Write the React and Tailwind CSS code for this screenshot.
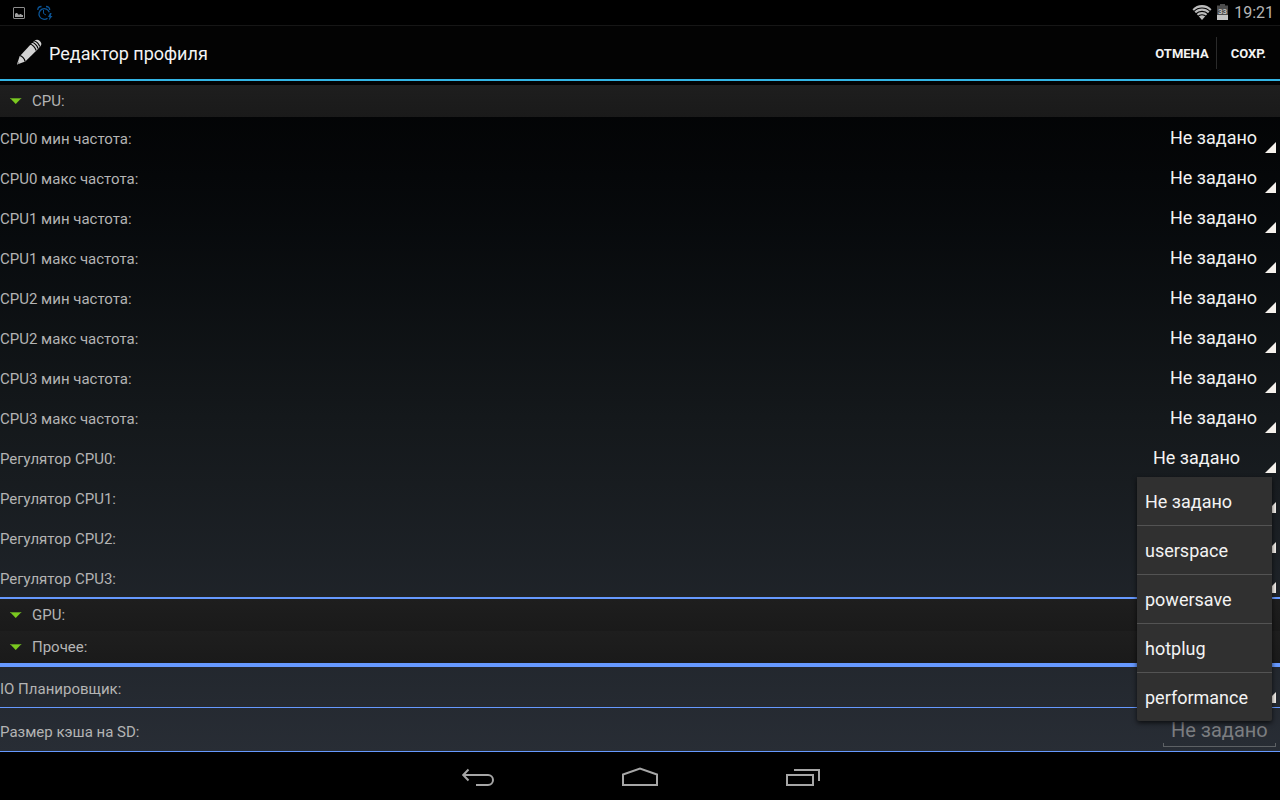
import { useState } from "react";

const UNSET = "Не задано";
const GOVERNORS = [UNSET, "userspace", "powersave", "hotplug", "performance"];

const FREQUENCIES = [
  "CPU0 мин частота:",
  "CPU0 макс частота:",
  "CPU1 мин частота:",
  "CPU1 макс частота:",
  "CPU2 мин частота:",
  "CPU2 макс частота:",
  "CPU3 мин частота:",
  "CPU3 макс частота:",
];

const REGULATORS = [
  "Регулятор CPU0:",
  "Регулятор CPU1:",
  "Регулятор CPU2:",
  "Регулятор CPU3:",
];

function StatusBar() {
  return (
    <div className="flex h-[26px] items-center justify-between border-b border-[#161616] bg-black pr-[6px] pl-[13px]">
      <div className="flex items-center gap-[12px]">
        <svg width="12" height="12" viewBox="0 0 12 12" aria-hidden="true">
          <rect x="0.5" y="0.5" width="11" height="11" rx="0.5" fill="none" stroke="#8c8c8c" />
          <path d="M2 10V7l1-1h1l1 1 1 1 1-1h1l1 1h1v2z" fill="#a0a0a0" />
        </svg>
        <svg width="16" height="16" viewBox="0 0 16 16" fill="none" stroke="#0b5394" aria-hidden="true">
          <path d="M10.500 13.200A5.300 5.300 0 1 1 12.300 7.300" strokeWidth="1.300" />
          <path d="M6.500 5v3.500L9 10" />
          <path d="M.8 5C.8 2.800 2 1.500 4.500 1.500M9 1.500c2.500 0 3.700 1.300 3.700 3.500" strokeWidth="1.300" />
          <path d="M13 8 11 12h1.500l-.7 3.500L15.500 11h-1.700l.8-3z" fill="#0b5394" stroke="none" />
        </svg>
      </div>
      <div className="flex items-center">
        <svg width="20" height="15" viewBox="0 0 20 15" aria-hidden="true">
          <path d="M10 15 .5 4.200C3 1.500 6.300 0 10 0s7 1.500 9.500 4.200z" fill="#bdbdbd" />
          <g fill="none" stroke="#000" strokeWidth="1.100">
            <path d="M2 6.300C4.200 4.100 7 3 10 3s5.800 1.100 8 3.300" />
            <path d="M3.800 9c1.700-1.700 3.800-2.600 6.200-2.600s4.500.9 6.200 2.600" />
            <path d="M5.600 11.700c1.200-1.200 2.700-1.900 4.400-1.900s3.200.7 4.400 1.900" />
          </g>
        </svg>
        <svg className="ml-[5px] mb-[2px]" width="11" height="16" viewBox="0 0 11 16" aria-hidden="true">
          <path d="M3 0h5v1.500h3V11H0V1.500h3z" fill="#4d4d4d" />
          <path d="M0 11h11v5H0z" fill="#c4c4c4" />
          <text x="5.500" y="10" textAnchor="middle" fontSize="8" fontWeight="700" fill="#bdbdbd" fontFamily="Roboto, sans-serif">33</text>
        </svg>
        <time className="ml-[6px] text-[16px] leading-5 text-[#b5b5b5]">19:21</time>
      </div>
    </div>
  );
}

function ActionBar() {
  return (
    <header className="flex h-[55px] items-center border-b-2 border-[#33b5e5] bg-[#030303]">
      <svg className="ml-4" width="27" height="27" viewBox="0 0 27 27" aria-hidden="true">
        <path
          d="M1 25.500 3.500 17.500 15.500 4.500 18.500 1.700c1.700-1.400 3.600-1.300 5.300.3s2.100 3.400.8 5L21.500 10.500 9.300 22.500z"
          fill="#d2d2d2"
        />
        <g fill="none" stroke="#030303" strokeWidth="1.200">
          <path d="M14 5c2.500.8 5 3.200 6.200 6.500" />
          <path d="M16 3.300c2.500.8 5 3 6 6.200" />
          <path d="M18 1.800c2.500.8 4.700 2.800 5.700 5.700" />
          <path d="M3.600 16.500c2.400.6 4.700 2.800 5.600 6" />
        </g>
        <path d="m1 25.500.9-3 2 1.900z" fill="#888" />
      </svg>
      <h1 className="ml-[6px] pt-[2px] text-[18px] leading-6 text-[#f3f3f3]">Редактор профиля</h1>
      <div className="ml-auto flex h-8 items-center text-[13px] font-bold text-[#f3f3f3]">
        <button type="button" className="h-8 pt-[2px] pr-[7px]">ОТМЕНА</button>
        <button type="button" className="h-8 border-l border-[#2a2a2a] pt-[2px] pr-[14px] pl-[14px]">СОХР.</button>
      </div>
    </header>
  );
}

function Section({ title }) {
  return (
    <h2>
      <button
        type="button"
        className="flex h-8 w-full items-center bg-linear-to-b from-[#1e1e1e] to-[#1a1a1a] pl-[10px] text-left text-[15px] text-[#b4b4b4]"
      >
        <svg width="12" height="6" viewBox="0 0 12 6" aria-hidden="true">
          <path d="M0 0h11.500L5.700 6z" fill="#7bc91f" />
          <path d="M0 0h11.500l-1 1H1z" fill="#5a9420" />
        </svg>
        <span className="ml-[10px]">{title}</span>
      </button>
    </h2>
  );
}

function Corner() {
  return (
    <svg
      className="pointer-events-none absolute right-1 bottom-1"
      width="11"
      height="11"
      viewBox="0 0 11 11"
      aria-hidden="true"
    >
      <path d="M11 0v11H0z" fill="#f5f1ec" />
    </svg>
  );
}

function SelectRow({ id, label, wide, options, value, onChange, children }) {
  return (
    <div className="relative flex h-10 items-center justify-between">
      <label htmlFor={id} className="pt-1 text-[15px] leading-5 text-[#b4b4b4]">
        {label}
      </label>
      <div className="relative">
        <select
          id={id}
          value={value}
          onChange={onChange}
          className={`block h-10 appearance-none bg-transparent pl-2 text-[18px] text-[#f3f3f3] outline-none ${
            wide ? "w-[135px]" : "w-[118px]"
          }`}
        >
          {options.map((option) => (
            <option key={option} className="bg-[#303030]">
              {option}
            </option>
          ))}
        </select>
        <Corner />
      </div>
      {children}
    </div>
  );
}

function GovernorMenu({ onPick }) {
  return (
    <ul
      role="listbox"
      aria-label="Регулятор CPU0"
      className="absolute top-full right-2 z-10 w-[135px] divide-y divide-[#535353] rounded-b-[2px] bg-[#303030] shadow-[0_2px_5px_rgba(0,0,0,0.7)]"
    >
      {GOVERNORS.map((name) => (
        <li key={name} role="option" aria-selected={name === UNSET}>
          <button
            type="button"
            onClick={() => onPick(name)}
            className="block h-12 w-full px-2 text-left text-[18px] text-[#f3f3f3]"
          >
            {name}
          </button>
        </li>
      ))}
    </ul>
  );
}

function NavBar() {
  return (
    <nav className="flex h-12 items-center justify-center gap-[126px] bg-black">
      <button type="button" aria-label="Назад">
        <svg width="36" height="22" viewBox="0 0 36 22" fill="none" stroke="#a6a6a6" strokeWidth="2">
          <path d="M4 10h25a5 5 0 0 1 0 10H17M9.500 4.500 4.200 10l5.300 5.500" />
        </svg>
      </button>
      <button type="button" aria-label="Домой">
        <svg width="38" height="22" viewBox="0 0 38 22" fill="none" stroke="#a6a6a6" strokeWidth="2">
          <path d="M2 20V9.500l17-6 17 6V20z" />
        </svg>
      </button>
      <button type="button" aria-label="Недавние">
        <svg width="36" height="22" viewBox="0 0 36 22" fill="none" stroke="#a6a6a6" strokeWidth="2">
          <path d="M2 10h26v10H2zM9 5h25v11" />
        </svg>
      </button>
    </nav>
  );
}

export default function App() {
  const [governor, setGovernor] = useState(UNSET);
  const [open, setOpen] = useState(true);

  const pick = (name) => {
    setGovernor(name);
    setOpen(false);
  };

  return (
    <div className="flex min-h-screen flex-col bg-black font-[Roboto,'Liberation_Sans',sans-serif]">
      <StatusBar />
      <ActionBar />
      <main className="flex-1 bg-linear-to-b from-[#020304] via-[#14181b] to-[#282d35] pt-1">
        <Section title="CPU:" />
        {FREQUENCIES.map((label, i) => (
          <SelectRow key={label} id={`freq-${i}`} label={label} options={[UNSET]} />
        ))}
        {REGULATORS.map((label, i) =>
          i === 0 ? (
            <SelectRow
              key={label}
              id="gov-0"
              label={label}
              wide
              options={GOVERNORS}
              value={governor}
              onChange={(e) => pick(e.target.value)}
            >
              {open && <GovernorMenu onPick={pick} />}
            </SelectRow>
          ) : (
            <SelectRow key={label} id={`gov-${i}`} label={label} wide options={GOVERNORS} />
          )
        )}
        <div className="border-t-2 border-b-4 border-[#6699ff]">
          <Section title="GPU:" />
          <Section title="Прочее:" />
        </div>
        <div className="border-b border-[#6699ff]">
          <SelectRow id="io" label="IO Планировщик:" wide options={[UNSET]} />
        </div>
        <div className="flex h-11 items-center justify-between border-b border-[#6699ff] pr-1">
          <label htmlFor="cache" className="pt-1 text-[15px] leading-5 text-[#b4b4b4]">
            Размер кэша на SD:
          </label>
          <div className="relative flex h-[35px] items-start">
            <input
              id="cache"
              placeholder={UNSET}
              className="h-[35px] w-[113px] bg-transparent px-2 text-[20px] text-[#f3f3f3] outline-none placeholder:text-[#7b7d80]"
            />
            <span className="absolute inset-x-0 bottom-0 h-1 border-x border-b border-[#5d6165]" />
          </div>
        </div>
      </main>
      <NavBar />
    </div>
  );
}
